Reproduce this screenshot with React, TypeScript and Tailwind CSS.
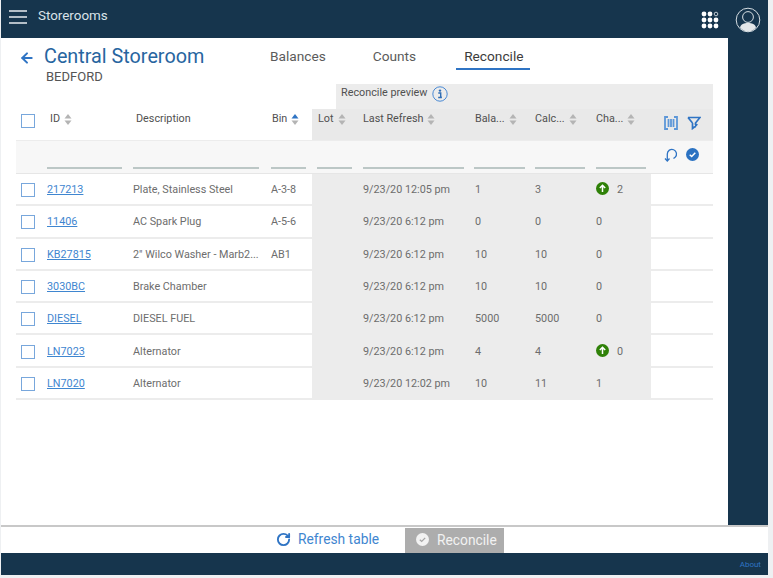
import { ArrowLeft, RotateCw } from "lucide-react";

const cols =
  "grid grid-cols-[27px_86px_138px_45px_47px_111px_61px_61px_59px_62px]";

const rows = [
  { id: "217213", desc: "Plate, Stainless Steel", bin: "A-3-8", time: "9/23/20 12:05 pm", bal: "1", calc: "3", change: "2", up: true },
  { id: "11406", desc: "AC Spark Plug", bin: "A-5-6", time: "9/23/20 6:12 pm", bal: "0", calc: "0", change: "0" },
  { id: "KB27815", desc: '2" Wilco Washer - Marb2...', bin: "AB1", time: "9/23/20 6:12 pm", bal: "10", calc: "10", change: "0" },
  { id: "3030BC", desc: "Brake Chamber", bin: "", time: "9/23/20 6:12 pm", bal: "10", calc: "10", change: "0" },
  { id: "DIESEL", desc: "DIESEL FUEL", bin: "", time: "9/23/20 6:12 pm", bal: "5000", calc: "5000", change: "0" },
  { id: "LN7023", desc: "Alternator", bin: "", time: "9/23/20 6:12 pm", bal: "4", calc: "4", change: "0", up: true },
  { id: "LN7020", desc: "Alternator", bin: "", time: "9/23/20 12:02 pm", bal: "10", calc: "11", change: "1" },
];

const Sort = ({ active = false }: { active?: boolean }) => (
  <svg width="8" height="13" viewBox="0 0 8 13" className="ml-[4px] shrink-0">
    <path d="M4 1 L7.5 5.5 H0.5 Z" fill={active ? "#2f74c4" : "#b4b4b4"} />
    <path d="M4 12 L7.5 7.5 H0.5 Z" fill="#b4b4b4" />
  </svg>
);

const Box = () => (
  <div className="h-[14px] w-[14px] border-[1.5px] border-[#78a7dc] bg-white" />
);

const Head = ({ label, active, gray, pl = "pl-[4px]" }: { label: string; active?: boolean; gray?: boolean; pl?: string }) => (
  <div className={`flex items-center pb-[10px] ${pl} ${gray ? "bg-[#e9e9e9]" : ""}`}>
    <span className="text-[10.8px] text-[#505050]">{label}</span>
    {label !== "Description" && <Sort active={active} />}
  </div>
);

const UpBadge = () => (
  <svg width="13" height="13" viewBox="0 0 13 13" className="mr-[8px] mt-[-3px] shrink-0">
    <circle cx="6.5" cy="6.5" r="6.5" fill="#2f8108" />
    <path d="M6.5 10V3.5M3.8 6 6.5 3.3 9.2 6" fill="none" stroke="#fff" strokeWidth="1.5" />
  </svg>
);

const App = () => {
  return (
    <div className="flex h-[578px] w-[773px] flex-col overflow-hidden bg-[#eef0f2] pb-[3px] pl-[1px] pr-[5px] font-['Roboto',sans-serif]">
      <header className="flex h-[38px] shrink-0 items-center bg-[#16354d] pl-[8px] pr-[7px]">
        <svg width="18" height="14" viewBox="0 0 18 14" className="mb-[5px]">
          <path d="M0 1h18M0 7h18M0 13h18" stroke="#e8ecef" strokeWidth="1.6" />
        </svg>
        <span className="mb-[6px] ml-[11px] text-[13.4px] text-[#d9e2e8]">Storerooms</span>
        <svg width="18" height="18" viewBox="0 0 18 18" className="ml-auto mr-[16px] mt-[2px]">
          <g fill="#fff">
            <circle cx="3" cy="3" r="2.4" />
            <circle cx="9" cy="3" r="2.4" />
            <circle cx="3" cy="9" r="2.4" />
            <circle cx="9" cy="9" r="2.4" />
            <circle cx="15" cy="9" r="2.4" />
            <circle cx="3" cy="15" r="2.4" />
            <circle cx="9" cy="15" r="2.4" />
            <circle cx="15" cy="15" r="2.4" />
          </g>
          <circle cx="15" cy="3" r="1.8" fill="none" stroke="#cfd8de" strokeWidth="0.9" />
        </svg>
        <svg width="26" height="26" viewBox="0 0 26 26" className="mt-[2px]">
          <circle cx="13" cy="13" r="11.8" fill="none" stroke="#d5dde2" strokeWidth="1" />
          <circle cx="13" cy="10" r="5.4" fill="none" stroke="#d5dde2" strokeWidth="1" />
          <path d="M5 20.5c1-3.5 4-4.5 8-4.5s7 1 8 4.5c-2 2.5-5 4-8 4s-6-1.500-8-4z" fill="#e3e6e8" />
        </svg>
      </header>

      <div className="flex min-h-0 flex-1">
        <main className="flex w-[727px] flex-col bg-white">
          <div className="flex h-[46px] shrink-0">
            <ArrowLeft size={16} strokeWidth={3} className="ml-[18px] mt-[12px] text-[#2f74c4]" />
            <div className="ml-[9px] w-[226px] pt-[5px]">
              <h1 className="text-[19.8px] leading-[28px] text-[#27659f]">Central Storeroom</h1>
              <p className="ml-[2px] text-[13px] leading-[11px] text-[#555]">BEDFORD</p>
            </div>
            <nav className="flex h-[32px] text-[13.7px] text-[#5b5b5b]">
              <span className="pt-[8px]">Balances</span>
              <span className="ml-[47px] pt-[8px]">Counts</span>
              <span className="ml-[40px] border-b-2 border-[#2f74c4] pl-[8px] pr-[7px] pt-[8px] text-[#3c3c3c]">Reconcile</span>
            </nav>
          </div>

          <section className="ml-[15px] mt-0 w-[697px]">
            <div className="ml-[320px] flex h-[25px] items-start bg-[#ececec] pl-[5px]">
              <span className="mt-[1px] text-[10.8px] text-[#505050]">Reconcile preview</span>
              <svg width="16" height="16" viewBox="0 0 16 16" className="ml-[5px] mt-[2px]">
                <circle cx="8" cy="8" r="7.2" fill="none" stroke="#4a8ad4" strokeWidth="1" />
                <circle cx="8" cy="4.6" r="1.2" fill="#2f6db5" />
                <path d="M6.3 7h2.4v4.300h1.100M6.200 11.500h3.700" fill="none" stroke="#2f6db5" strokeWidth="1.4" />
              </svg>
            </div>

            <div className={`${cols} h-[32px] border-b border-[#ececec]`}>
              <div className="flex items-start pl-[5px] pt-[5px]">
                <Box />
              </div>
              <Head label="ID" pl="pl-[7px]" />
              <Head label="Description" pl="pl-[7px]" />
              <Head label="Bin" active pl="pl-[5px]" />
              <Head label="Lot" gray pl="pl-[6px]" />
              <Head label="Last Refresh" gray />
              <Head label="Bala..." gray pl="pl-[5px]" />
              <Head label="Calc..." gray />
              <Head label="Cha..." gray />
              <div className="flex items-start gap-[9px] bg-[#e9e9e9] pl-[13px] pt-[7px]">
                <svg width="14" height="14" viewBox="0 0 14 14">
                  <path d="M4 1H1v12h3M10 1h3v12h-3" fill="none" stroke="#5d97d8" strokeWidth="1.800" />
                  <path d="M4.500 3v8M7 3v8M9.500 3v8" stroke="#5d97d8" strokeWidth="1.800" />
                </svg>
                <svg width="14" height="14" viewBox="0 0 14 14">
                  <path d="M1 1.500h12L8.500 7v2M5.500 7 1 1.500M5.500 7v5.500L8 10.500" fill="none" stroke="#2f74c4" strokeWidth="1.700" />
                  <path d="M8 7l3 1.500-3 3.500z" fill="#2f74c4" />
                </svg>
              </div>
            </div>

            <div className={`${cols} h-[33px] border-b border-[#e6e6e6] bg-[#f7f7f7]`}>
              <div />
              <div className="flex items-end pb-[4px] pl-[4px]"><div className="h-[2px] w-[75px] bg-[#bcc7c6]" /></div>
              <div className="flex items-end pb-[4px] pl-[4px]"><div className="h-[2px] w-[126px] bg-[#bcc7c6]" /></div>
              <div className="flex items-end pb-[4px] pl-[4px]"><div className="h-[2px] w-[35px] bg-[#bcc7c6]" /></div>
              <div className="flex items-end pb-[4px] pl-[5px]"><div className="h-[2px] w-[35px] bg-[#bcc7c6]" /></div>
              <div className="flex items-end pb-[4px] pl-[4px]"><div className="h-[2px] w-[101px] bg-[#bcc7c6]" /></div>
              <div className="flex items-end pb-[4px] pl-[4px]"><div className="h-[2px] w-[51px] bg-[#bcc7c6]" /></div>
              <div className="flex items-end pb-[4px] pl-[4px]"><div className="h-[2px] w-[50px] bg-[#bcc7c6]" /></div>
              <div className="flex items-end pb-[4px] pl-[4px]"><div className="h-[2px] w-[50px] bg-[#bcc7c6]" /></div>
              <div className="flex items-start gap-[8px] pl-[13px] pt-[7px]">
                <svg width="14" height="14" viewBox="0 0 14 14">
                  <path d="M5.500 10.500 3.300 13 1 10.500" fill="none" stroke="#2f74c4" strokeWidth="1.300" />
                  <path d="M3.300 12.500V6a4.600 4.600 0 1 1 7.800 3.300 L9.500 10.500" fill="none" stroke="#2f74c4" strokeWidth="1.300" />
                </svg>
                <svg width="13" height="13" viewBox="0 0 13 13">
                  <circle cx="6.500" cy="6.500" r="6.500" fill="#2b72c2" />
                  <path d="M3.700 6.700 5.700 8.500 9.300 4.800" fill="none" stroke="#fff" strokeWidth="1.500" />
                </svg>
              </div>
            </div>

            {rows.map((r) => (
              <div key={r.id} className={`${cols} h-[32.3px] border-b-2 border-[#ececec] text-[10.8px] text-[#6d6d6d]`}>
                <div className="flex items-center pl-[5px] pt-[2px]">
                  <Box />
                </div>
                <div className="flex items-center pl-[4px] pt-[2px]">
                  <a className="text-[#3f86d0] underline">{r.id}</a>
                </div>
                <div className="flex items-center whitespace-nowrap pl-[4px] pt-[2px]">{r.desc}</div>
                <div className="flex items-center pl-[4px] pt-[2px]">{r.bin}</div>
                <div className="bg-[#ececec]" />
                <div className="flex items-center bg-[#ececec] pl-[4px] pt-[2px]">{r.time}</div>
                <div className="flex items-center bg-[#ececec] pl-[5px] pt-[2px]">{r.bal}</div>
                <div className="flex items-center bg-[#ececec] pl-[4px] pt-[2px]">{r.calc}</div>
                <div className="flex items-center bg-[#ececec] pl-[4px] pt-[2px]">
                  {r.up && <UpBadge />}
                  {r.change}
                </div>
                <div />
              </div>
            ))}
          </section>
        </main>
        <aside className="flex-1 bg-[#16354d]" />
      </div>

      <div className="flex h-[28px] shrink-0 items-center border-t-2 border-[#c8c8c8] bg-white pl-[275px]">
        <RotateCw size={15} strokeWidth={3} className="mb-[2px] text-[#2f74c4]" />
        <span className="mb-[2px] ml-[7px] w-[107px] text-[13.8px] text-[#3f86d0]">Refresh table</span>
        <div className="flex h-[25px] w-[99px] items-center bg-[#adadad] pl-[11px]">
          <svg width="13" height="13" viewBox="0 0 13 13" className="mb-[2px]">
            <circle cx="6.500" cy="6.500" r="6.500" fill="#f2f2f2" />
            <path d="M3.800 6.700 5.700 8.400 9.200 4.900" fill="none" stroke="#a5a5a5" strokeWidth="1.300" />
          </svg>
          <span className="ml-[8px] text-[13.8px] text-[#f2f2f2]">Reconcile</span>
        </div>
      </div>

      <footer className="flex h-[22px] shrink-0 items-center justify-end bg-[#16354d] pr-[7px] pt-[2px]">
        <span className="text-[8px] text-[#2f74c4]">About</span>
      </footer>
    </div>
  );
};

export default App;
